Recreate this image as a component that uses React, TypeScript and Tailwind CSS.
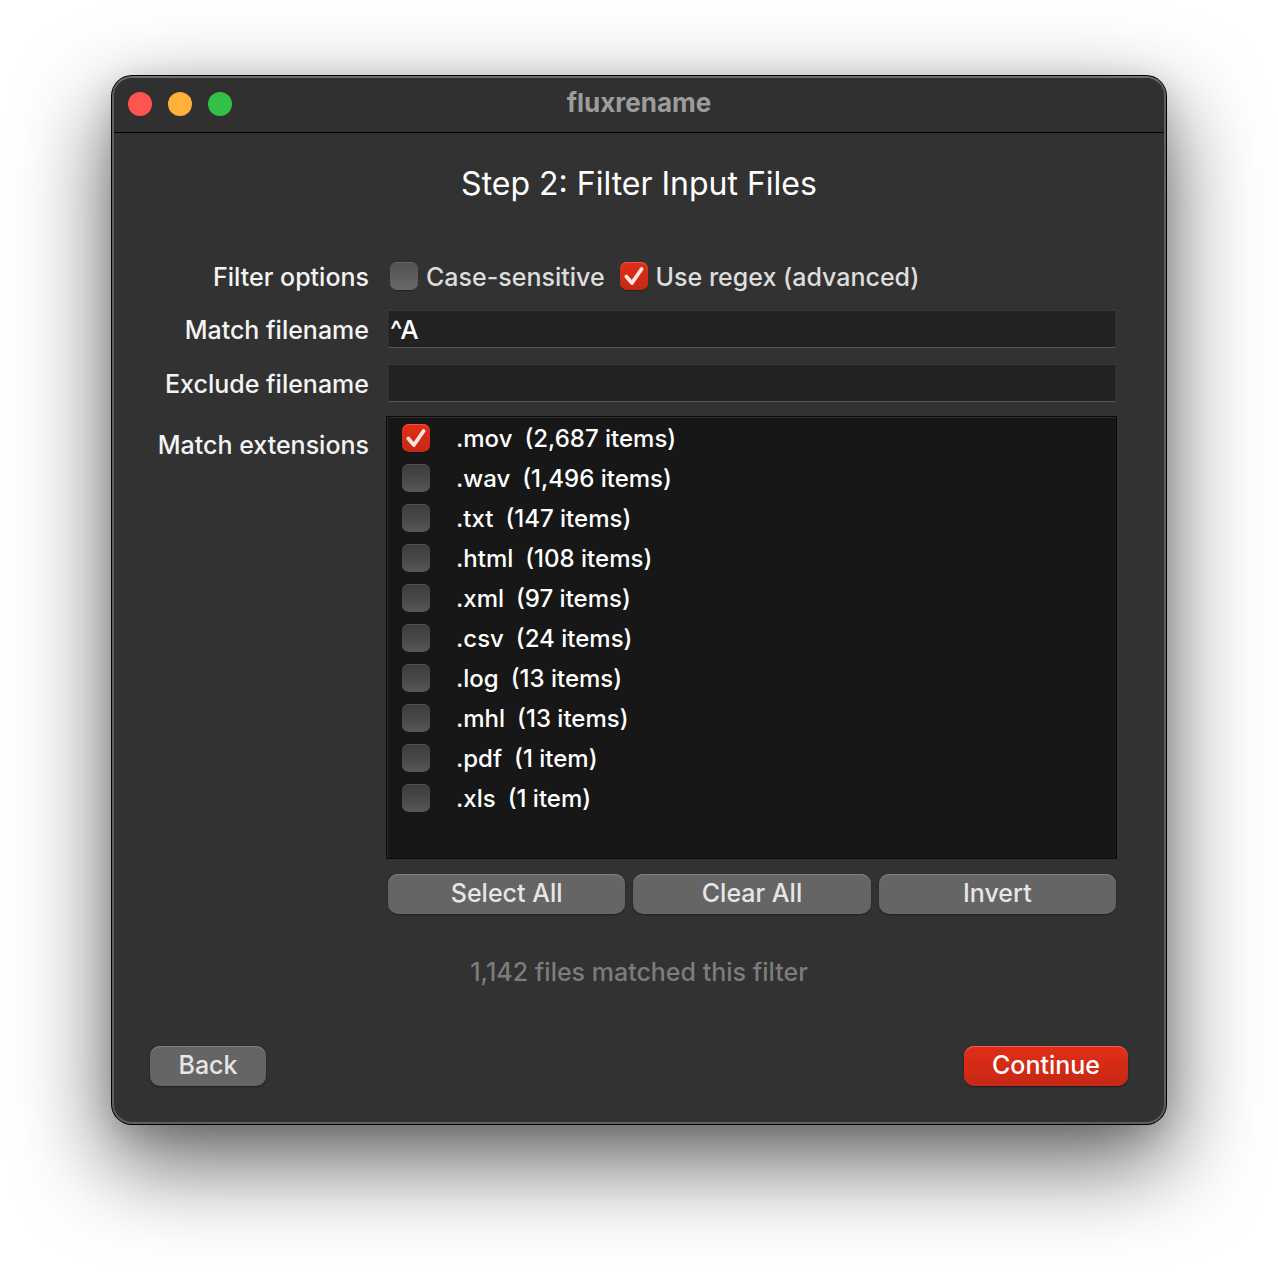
import { useState } from "react";

type Extension = { name: string; count: string };

const extensions: Extension[] = [
  { name: ".mov", count: "(2,687 items)" },
  { name: ".wav", count: "(1,496 items)" },
  { name: ".txt", count: "(147 items)" },
  { name: ".html", count: "(108 items)" },
  { name: ".xml", count: "(97 items)" },
  { name: ".csv", count: "(24 items)" },
  { name: ".log", count: "(13 items)" },
  { name: ".mhl", count: "(13 items)" },
  { name: ".pdf", count: "(1 item)" },
  { name: ".xls", count: "(1 item)" },
];

function CheckBox({
  id,
  checked,
  onChange,
  dark = false,
}: {
  id: string;
  checked: boolean;
  onChange: () => void;
  dark?: boolean;
}) {
  const off = dark
    ? "from-[#3b3b3b] to-[#575757] shadow-[inset_0_1px_0_#525252]"
    : "from-[#525252] to-[#686868] shadow-[inset_0_1px_0_#656565,0_1px_1px_#00000055]";
  return (
    <span className="relative block size-7 shrink-0">
      <input
        id={id}
        type="checkbox"
        checked={checked}
        onChange={onChange}
        className={`block size-7 appearance-none rounded-[7px] bg-linear-to-b ${
          checked
            ? "from-[#e22e18] to-[#c52814] shadow-[inset_0_1px_0_#ec5341,0_1px_1px_#00000055]"
            : off
        }`}
      />
      {checked && (
        <svg viewBox="0 0 28 28" className="pointer-events-none absolute inset-0 size-7" aria-hidden="true">
          <path
            d="M6.3 14.6 L11.9 21 L21.6 7"
            fill="none"
            stroke="#fbe3df"
            strokeWidth="3.8"
            strokeLinecap="round"
            strokeLinejoin="round"
          />
        </svg>
      )}
    </span>
  );
}

const grayButton =
  "h-10 rounded-[10px] bg-[#656565] pb-0.5 text-[25px] leading-9 text-[#e6e6e6] shadow-[inset_0_1px_0_#808080,0_1px_2px_#00000066]";
const field =
  "h-[38px] w-full min-w-0 border border-[#2f2f2f] border-t-[#393939] border-b-[#565656] bg-[#222222] px-px text-[26px] text-white outline-none";
const labelText = "text-right text-[25px] whitespace-nowrap text-[#f4f4f4]";

export default function App() {
  const [caseSensitive, setCaseSensitive] = useState(false);
  const [regex, setRegex] = useState(true);
  const [match, setMatch] = useState("^A");
  const [exclude, setExclude] = useState("");
  const [selected, setSelected] = useState<string[]>([".mov"]);

  const toggle = (name: string) =>
    setSelected((s) => (s.includes(name) ? s.filter((n) => n !== name) : [...s, name]));

  return (
    <div className="overflow-hidden bg-white px-28 pt-19 pb-37 font-['Inter',sans-serif] font-medium">
      <main className="rounded-[20px] border-2 border-[#5f5f5f] border-t-[#707070] bg-[#323232] shadow-[0_0_0_1px_#000,0_36px_90px_4px_#00000099,0_8px_30px_#00000026]">
        <header className="grid h-[55px] grid-cols-[1fr_auto_1fr] items-center rounded-t-[18px] border-b border-black bg-[#303030] px-3.5 pb-1">
          <div className="flex gap-4 pt-0.5">
            <button aria-label="Close" className="size-6 rounded-full bg-[#ff544f]" />
            <button aria-label="Minimize" className="size-6 rounded-full bg-[#ffb13c]" />
            <button aria-label="Zoom" className="size-6 rounded-full bg-[#32c146]" />
          </div>
          <span className="text-[26px] leading-8 font-bold text-[#9c9c9c]">fluxrename</span>
        </header>

        <div className="px-9 pt-[29px] pb-9">
          <h1 className="text-center text-[32px] leading-11 font-normal text-white">Step 2: Filter Input Files</h1>

          <div className="mt-13 mr-3 grid grid-cols-[219px_1fr] gap-x-[19px] gap-y-4">
            <span className={`h-9 leading-[38px] ${labelText}`}>Filter options</span>
            <div className="flex h-9 items-center gap-[15px] pl-0.5 text-[25px] leading-9 whitespace-nowrap text-[#dddddd]">
              <div className="flex items-center gap-2">
                <CheckBox id="case" checked={caseSensitive} onChange={() => setCaseSensitive(!caseSensitive)} />
                <label htmlFor="case" className="pt-0.5">Case-sensitive</label>
              </div>
              <div className="flex items-center gap-2">
                <CheckBox id="regex" checked={regex} onChange={() => setRegex(!regex)} />
                <label htmlFor="regex" className="pt-0.5">Use regex (advanced)</label>
              </div>
            </div>

            <label htmlFor="match" className={`h-[38px] leading-10 ${labelText}`}>Match filename</label>
            <input id="match" type="text" value={match} onChange={(e) => setMatch(e.target.value)} className={field} />

            <label htmlFor="exclude" className={`h-[38px] leading-10 ${labelText}`}>Exclude filename</label>
            <input id="exclude" type="text" value={exclude} onChange={(e) => setExclude(e.target.value)} className={field} />
          </div>

          <div className="mt-3.5 mr-3 grid grid-cols-[219px_1fr] gap-x-[19px]">
            <span id="ext-label" className={`pt-[11px] leading-9 ${labelText}`}>Match extensions</span>
            <div>
              <ul
                aria-labelledby="ext-label"
                className="-mr-px -ml-0.5 border border-[#0b0b0b] bg-[#171717] pt-px pb-10 shadow-[inset_1px_1px_0_#2b2b2b]"
              >
                {extensions.map((ext) => (
                  <li key={ext.name} className="flex h-10 items-center gap-[26px] pl-[15px]">
                    <CheckBox
                      dark
                      id={`ext${ext.name}`}
                      checked={selected.includes(ext.name)}
                      onChange={() => toggle(ext.name)}
                    />
                    <label htmlFor={`ext${ext.name}`} className="flex gap-3 pt-0.5 text-[24px] leading-8 text-white">
                      <span>{ext.name}</span>
                      <span>{ext.count}</span>
                    </label>
                  </li>
                ))}
              </ul>
              <div className="mt-[15px] grid grid-cols-3 gap-2">
                <button className={grayButton} onClick={() => setSelected(extensions.map((e) => e.name))}>
                  Select All
                </button>
                <button className={grayButton} onClick={() => setSelected([])}>
                  Clear All
                </button>
                <button
                  className={grayButton}
                  onClick={() => setSelected(extensions.map((e) => e.name).filter((n) => !selected.includes(n)))}
                >
                  Invert
                </button>
              </div>
            </div>
          </div>

          <p className="mt-10 text-center text-[25px] leading-9 text-[#7c7c7c]">1,142 files matched this filter</p>

          <div className="mt-14 flex justify-between">
            <button className={`w-[116px] ${grayButton}`}>Back</button>
            <button className="h-10 w-[164px] rounded-[10px] bg-linear-to-b from-[#e22e18] to-[#c52814] pb-0.5 text-[25px] leading-9 text-white shadow-[inset_0_1px_0_#f0604e,0_1px_2px_#00000066]">
              Continue
            </button>
          </div>
        </div>
      </main>
    </div>
  );
}
